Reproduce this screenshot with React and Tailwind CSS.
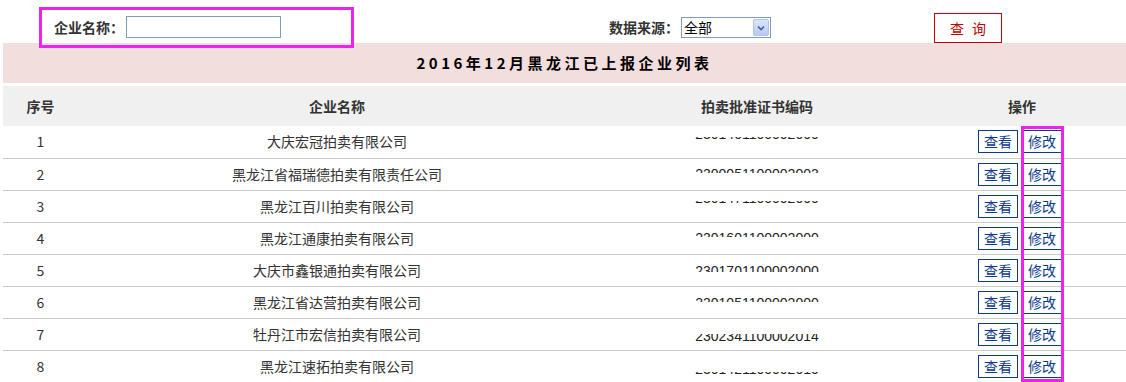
import React from 'react';

const FONT = { fontFamily: '"Microsoft YaHei", "Noto Sans CJK SC", sans-serif' };

// license numbers in the source are partly cut off; win = visible slice, txt = text shift
const rows = [
  { id: 1, name: '大庆宏冠拍卖有限公司', code: '2301401100002000', win: 'mt-[11px] h-[2px]', txt: '-mt-[11px]' },
  { id: 2, name: '黑龙江省福瑞德拍卖有限责任公司', code: '2300051100002003', win: 'mt-[10px] h-[4px]', txt: '-mt-[3px]' },
  { id: 3, name: '黑龙江百川拍卖有限公司', code: '2301471100002000', win: 'mt-[10px] h-[2px]', txt: '-mt-[11px]' },
  { id: 4, name: '黑龙江通康拍卖有限公司', code: '2301601100002000', win: 'mt-[10px] h-[4px]', txt: '-mt-[3px]' },
  { id: 5, name: '大庆市鑫银通拍卖有限公司', code: '2301701100002000', win: 'mt-[11px] h-[6px]', txt: '-mt-[3px]' },
  { id: 6, name: '黑龙江省达营拍卖有限公司', code: '2301051100002000', win: 'mt-[11px] h-[4px]', txt: '-mt-[3px]' },
  { id: 7, name: '牡丹江市宏信拍卖有限公司', code: '2302341100002014', win: 'mt-[15px] h-[7px]', txt: '-mt-[6px]' },
  { id: 8, name: '黑龙江速拓拍卖有限公司', code: '2301421100002010', win: 'mt-[21px] h-[2px]', txt: '-mt-[11px]' },
];

function SmallBtn({ children }) {
  return (
    <button className="w-[40px] h-[23px] border border-[#0a3a8c] bg-white text-[#0a3a8c] text-[14px] leading-[21px]">
      {children}
    </button>
  );
}

export default function App() {
  return (
    <div className="relative w-[1126px] h-[382px] bg-white text-[#333] overflow-hidden" style={FONT}>
      {/* search bar */}
      <div className="flex items-start h-[43px] text-[14px]">
        <span className="ml-[54px] mt-[16px] leading-[22px] font-bold">企业名称：</span>
        <input className="ml-[2px] mt-[16px] w-[155px] h-[22px] border border-[#7f9db9] outline-none" />
        <span className="ml-[328px] mt-[16px] leading-[22px] font-bold">数据来源：</span>
        <div className="ml-[2px] mt-[17px] w-[90px] h-[21px] border border-[#7f9db9] flex items-center justify-between pl-[2px] pr-[1px] text-black">
          <span className="leading-[19px]">全部</span>
          <span className="w-[16px] h-[17px] rounded-[2px] bg-gradient-to-b from-[#dbe6fd] to-[#b6c8f6] border border-[#b0c2ee] flex items-center justify-center">
            <svg width="8" height="6" viewBox="0 0 8 6">
              <path d="M1 1.5 L4 4.5 L7 1.5" stroke="#4d6185" strokeWidth="1.6" fill="none" />
            </svg>
          </span>
        </div>
        <button className="ml-[163px] mt-[13px] w-[68px] h-[30px] border border-[#c00000] text-[#c00000] text-[14px] bg-white flex items-center justify-center">
          <span>查</span>
          <span className="ml-[8px]">询</span>
        </button>
      </div>

      {/* title */}
      <div className="ml-[3px] h-[40px] bg-[#f2dedc] flex items-center justify-center text-[15px] font-bold text-black tracking-[3.5px]">
        2016年12月黑龙江已上报企业列表
      </div>

      {/* table */}
      <table className="mt-[3px] ml-[3px] w-[1123px] border-collapse text-[14px]">
        <thead>
          <tr className="h-[40px] bg-[#f0f0f0] font-bold">
            <th className="w-[75px] font-bold">序号</th>
            <th className="w-[518px] font-bold">企业名称</th>
            <th className="w-[322px] font-bold">拍卖批准证书编码</th>
            <th className="font-bold">操作</th>
          </tr>
        </thead>
        <tbody>
          {rows.map((r) => (
            <tr key={r.id} className="h-[32px] border-b border-[#cccccc]">
              <td className="text-center">{r.id}</td>
              <td className="text-center">{r.name}</td>
              <td className="p-0 align-top">
                <div className="h-[31px] flex flex-col items-center">
                  <div className={`${r.win} overflow-hidden`}>
                    <div className={`${r.txt} leading-[16px] text-[14px] text-[#222]`} style={{ fontFamily: '"Liberation Sans", Arial, sans-serif' }}>
                      {r.code}
                    </div>
                  </div>
                </div>
              </td>
              <td>
                <div className="flex justify-center gap-[4px] pr-[4px]">
                  <SmallBtn>查看</SmallBtn>
                  <SmallBtn>修改</SmallBtn>
                </div>
              </td>
            </tr>
          ))}
        </tbody>
      </table>

      {/* highlight marks */}
      <div className="absolute left-[39px] top-[7px] w-[315px] h-[41px] border-[3px] border-[#ee22ee] pointer-events-none" />
      <div className="absolute left-[1021px] top-[126px] w-[43px] h-[256px] border-[3px] border-[#ee22ee] pointer-events-none" />
    </div>
  );
}
